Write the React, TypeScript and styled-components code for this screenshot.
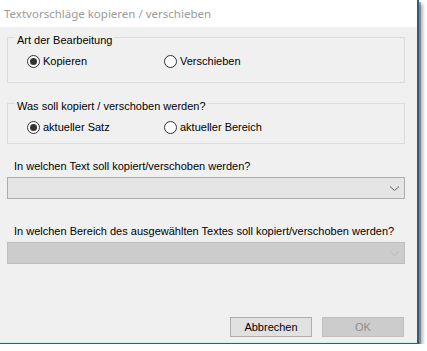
import React from "react";
import styled, { createGlobalStyle } from "styled-components";

const GlobalStyle = createGlobalStyle`
  html, body { margin: 0; padding: 0; background: #ffffff; }
  * { box-sizing: border-box; }
`;

const Window = styled.div`
  width: 419px;
  height: 344px;
  display: flex;
  flex-direction: column;
  background: #f0f0f0;
  border-right: 2px solid #36597c;
  border-bottom: 1px solid #36597c;
  box-shadow: inset 0 -1px 0 #d4eef2, 2px 2px 0 rgba(60, 70, 80, 0.45),
    4px 4px 3px rgba(0, 0, 0, 0.28);
  font-family: "Liberation Sans", Arial, sans-serif;
  font-size: 11px;
  color: #000;
`;

const TitleBar = styled.div`
  height: 27px;
  flex: none;
  background: #ffffff;
  padding: 6px 0 0 4px;
  font-family: "Noto Sans", "Open Sans", sans-serif;
  font-size: 11.5px;
  line-height: 16px;
  color: #9a9a9a;
  white-space: nowrap;
`;

const Body = styled.div`
  flex: 1;
  display: flex;
  flex-direction: column;
  padding: 10px 12px 6px 7px;
`;

const GroupBox = styled.div<{ $top: number; $bottom: number; $gap?: number }>`
  position: relative;
  margin-top: ${(p) => p.$gap ?? 0}px;
  border: 1px solid #dcdcdc;
  padding: ${(p) => p.$top}px 0 ${(p) => p.$bottom}px 19px;
`;

const GroupLabel = styled.span`
  position: absolute;
  top: -4px;
  left: 7px;
  padding: 0 2px 0 2px;
  background: #f0f0f0;
  line-height: 13px;
  white-space: nowrap;
`;

const RadioRow = styled.div`
  display: grid;
  grid-template-columns: 137px auto;
  height: 13px;
`;

const RadioItem = styled.label`
  display: flex;
  align-items: center;
  gap: 3px;
  line-height: 13px;
  white-space: nowrap;
`;

const RadioCircle = styled.span<{ $checked?: boolean }>`
  width: 13px;
  height: 13px;
  flex: none;
  border: 1px solid #333333;
  border-radius: 50%;
  background: #ffffff;
  display: flex;
  align-items: center;
  justify-content: center;
  &::after {
    content: "";
    width: 7px;
    height: 7px;
    border-radius: 50%;
    background: #333333;
    display: ${(p) => (p.$checked ? "block" : "none")};
  }
`;

const FieldLabel = styled.div<{ $gap: number }>`
  margin-top: ${(p) => p.$gap}px;
  padding-left: 7px;
  line-height: 13px;
  white-space: nowrap;
`;

const Combo = styled.div<{ $disabled?: boolean }>`
  margin-top: 4px;
  height: 22px;
  display: flex;
  align-items: center;
  justify-content: flex-end;
  padding-right: 4px;
  background: ${(p) => (p.$disabled ? "#cccccc" : "#e5e5e5")};
  border: 1px solid ${(p) => (p.$disabled ? "#bfbfbf" : "#acacac")};
  color: ${(p) => (p.$disabled ? "#bcbcbc" : "#606060")};
`;

const ButtonRow = styled.div`
  margin-top: auto;
  display: flex;
  justify-content: flex-end;
  gap: 10px;
  padding-right: 1px;
`;

const Button = styled.button<{ $disabled?: boolean }>`
  width: 82px;
  height: 20px;
  padding: 0;
  font-family: "Liberation Sans", Arial, sans-serif;
  font-size: 11px;
  line-height: 18px;
  background: ${(p) => (p.$disabled ? "#cccccc" : "#e1e1e1")};
  border: 1px solid ${(p) => (p.$disabled ? "#bfbfbf" : "#adadad")};
  color: ${(p) => (p.$disabled ? "#8c8c8c" : "#000000")};
  border-radius: 0;
`;

const Chevron = () => (
  <svg width="11" height="7" viewBox="0 0 11 7" aria-hidden="true">
    <path d="M1 1.5 L5.5 5.5 L10 1.5" fill="none" stroke="currentColor" strokeWidth="1" />
  </svg>
);

export default function App() {
  return (
    <>
      <GlobalStyle />
      <Window>
        <TitleBar>Textvorschläge kopieren / verschieben</TitleBar>
        <Body>
          <GroupBox $top={17} $bottom={14}>
            <GroupLabel>Art der Bearbeitung</GroupLabel>
            <RadioRow>
              <RadioItem>
                <RadioCircle $checked />
                Kopieren
              </RadioItem>
              <RadioItem>
                <RadioCircle />
                Verschieben
              </RadioItem>
            </RadioRow>
          </GroupBox>
          <GroupBox $top={17} $bottom={9} $gap={20}>
            <GroupLabel>Was soll kopiert / verschoben werden?</GroupLabel>
            <RadioRow>
              <RadioItem>
                <RadioCircle $checked />
                aktueller Satz
              </RadioItem>
              <RadioItem>
                <RadioCircle />
                aktueller Bereich
              </RadioItem>
            </RadioRow>
          </GroupBox>
          <FieldLabel $gap={16}>In welchen Text soll kopiert/verschoben werden?</FieldLabel>
          <Combo>
            <Chevron />
          </Combo>
          <FieldLabel $gap={26}>
            In welchen Bereich des ausgewählten Textes soll kopiert/verschoben werden?
          </FieldLabel>
          <Combo $disabled>
            <Chevron />
          </Combo>
          <ButtonRow>
            <Button>Abbrechen</Button>
            <Button $disabled disabled>
              OK
            </Button>
          </ButtonRow>
        </Body>
      </Window>
    </>
  );
}
